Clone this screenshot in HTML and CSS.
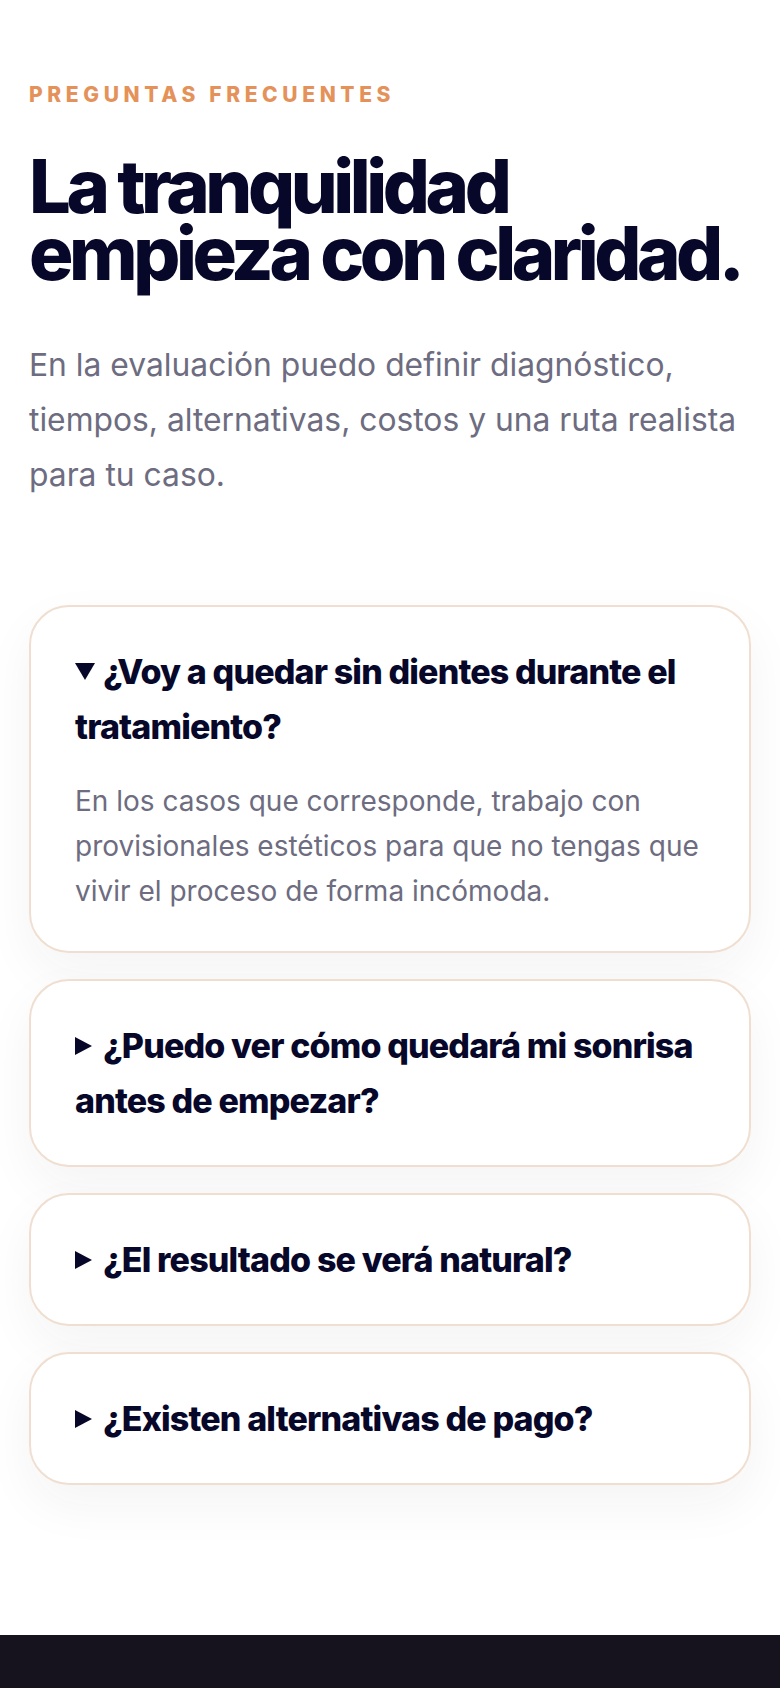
FILE: index.html
```html
<!DOCTYPE html>
<html>
<head>
  <title>Preguntas frecuentes</title>
  <link rel="stylesheet" href="styles.css">
</head>
<body>
  <section class="faq">
    <p class="eyebrow">Preguntas frecuentes</p>
    <h2 class="faq-title">La tranquilidad empieza con claridad.</h2>
    <p class="faq-intro">En la evaluación puedo definir diagnóstico, tiempos, alternativas, costos y una ruta realista para tu caso.</p>

    <div class="faq-list">
      <details class="faq-item" open>
        <summary>¿Voy a quedar sin dientes durante el tratamiento?</summary>
        <p>En los casos que corresponde, trabajo con provisionales estéticos para que no tengas que vivir el proceso de forma incómoda.</p>
      </details>
      <details class="faq-item">
        <summary>¿Puedo ver cómo quedará mi sonrisa antes de empezar?</summary>
      </details>
      <details class="faq-item">
        <summary>¿El resultado se verá natural?</summary>
      </details>
      <details class="faq-item">
        <summary>¿Existen alternativas de pago?</summary>
      </details>
    </div>
  </section>

  <footer class="site-footer"></footer>
</body>
</html>
```

FILE: styles.css
```css
* {
  box-sizing: border-box;
}

body {
  margin: 0;
  background-color: #fff;
  font-family: Inter, "Noto Sans", sans-serif;
  color: #0a0a28;
}

.faq {
  padding: 84px 29px 150px;
}

.eyebrow {
  margin: 0 0 47px;
  color: #e4925a;
  font-size: 21px;
  font-weight: 800;
  letter-spacing: 0.22em;
  text-transform: uppercase;
  line-height: 22px;
}

.faq-title {
  margin: 0;
  color: #07072a;
  font-size: 74px;
  font-weight: 800;
  line-height: 67px;
  letter-spacing: -0.06em;
}

.faq-intro {
  margin: 50px 0 0;
  color: #6d6c80;
  font-size: 31.8px;
  line-height: 55px;
}

.faq-list {
  display: flex;
  flex-direction: column;
  gap: 26px;
  margin-top: 103px;
}

.faq-item {
  padding: 37px 44px;
  background-color: #fff;
  border: 2px solid #f0dfd0;
  border-radius: 40px;
  box-shadow: 0 20px 50px rgba(30, 30, 60, 0.05);
}

.faq-item summary {
  display: block;
  color: #07072a;
  font-size: 34px;
  font-weight: 800;
  line-height: 55px;
  letter-spacing: -0.025em;
  list-style: none;
  cursor: pointer;
}

.faq-item summary::-webkit-details-marker {
  display: none;
}

/* closed arrow */
.faq-item summary::before {
  content: "";
  display: inline-block;
  margin: 0 11px 3px 0;
  border-left: 17px solid #07072a;
  border-top: 9.5px solid transparent;
  border-bottom: 9.5px solid transparent;
}

.faq-item[open] summary::before {
  margin: 0 8px 4px 0;
  border-top: 17px solid #07072a;
  border-left: 10px solid transparent;
  border-right: 10px solid transparent;
  border-bottom: 0;
}

.faq-item p {
  margin: 25px 0 0;
  color: #6d6c80;
  font-size: 28px;
  line-height: 45px;
}

.site-footer {
  height: 57px;
  background-color: #16131f;
}
```
